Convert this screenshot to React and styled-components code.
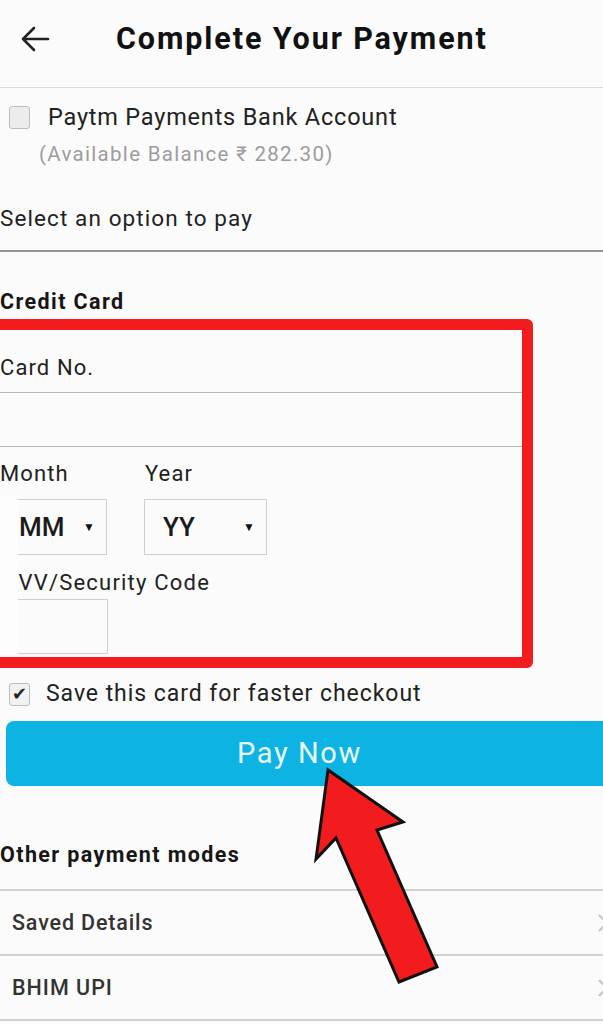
import styled, { createGlobalStyle } from "styled-components";

const GlobalStyle = createGlobalStyle`
  body {
    margin: 0;
    background: #fafbfa;
    font-family: Roboto, "Noto Sans", sans-serif;
    color: #1e1e1e;
  }
`;

function BackArrow() {
  return (
    <svg width="30" height="26" viewBox="0 0 30 26">
      <path
        d="M28 13 H3 M14 2 L3 13 L14 24"
        fill="none"
        stroke="#222"
        strokeWidth="2.6"
        strokeLinecap="round"
        strokeLinejoin="round"
      />
    </svg>
  );
}

function ChevronIcon() {
  return (
    <svg width="12" height="20" viewBox="0 0 12 20">
      <path d="M2 2 L10 10 L2 18" fill="none" stroke="#c4c4c4" strokeWidth="2" />
    </svg>
  );
}

function Pointer() {
  return (
    <svg width="150" height="240" viewBox="0 0 150 240">
      <polygon
        points="28,10 16,99 36,78 99,222 137,207 77,70 103,62"
        fill="#f21b1e"
        stroke="#111"
        strokeWidth="3"
        strokeLinejoin="miter"
      />
    </svg>
  );
}

function App() {
  return (
    <Page>
      <GlobalStyle />
      <Header>
        <BackButton>
          <BackArrow />
        </BackButton>
        <Title>Complete Your Payment</Title>
      </Header>

      <BankRow>
        <Check />
        <BankText>
          <BankName>Paytm Payments Bank Account</BankName>
          <Balance>(Available Balance ₹ 282.30)</Balance>
        </BankText>
      </BankRow>

      <SelectPrompt>Select an option to pay</SelectPrompt>

      <SectionTitle $top={36}>Credit Card</SectionTitle>

      <CardBox>
        <CardLabel>Card No.</CardLabel>
        <CardInput />
        <ExpiryLabels>
          <FieldLabel $width={145}>Month</FieldLabel>
          <FieldLabel>Year</FieldLabel>
        </ExpiryLabels>
        <ExpiryRow>
          <Dropdown $width={117} $pad={28}>
            MM <Caret>▼</Caret>
          </Dropdown>
          <Dropdown $width={123} $pad={18}>
            YY <Caret>▼</Caret>
          </Dropdown>
        </ExpiryRow>
        <CvvLabel>CVV/Security Code</CvvLabel>
        <CvvInput />
        <Glare />
      </CardBox>

      <SaveRow>
        <Check $checked>✔</Check>
        <SaveText>Save this card for faster checkout</SaveText>
      </SaveRow>

      <PayButton>Pay Now</PayButton>

      <SectionTitle $top={55}>Other payment modes</SectionTitle>

      <ModeList>
        <ModeRow $spacing={0.85}>
          Saved Details
          <ChevronIcon />
        </ModeRow>
        <ModeRow $spacing={1}>
          BHIM UPI
          <ChevronIcon />
        </ModeRow>
      </ModeList>

      <PointerWrap>
        <Pointer />
      </PointerWrap>
    </Page>
  );
}

const Page = styled.div`
  position: relative;
  width: 603px;
  height: 1024px;
  overflow: hidden;
`;

const Header = styled.header`
  display: flex;
  align-items: center;
  height: 87px;
  border-bottom: 1px solid #dcdcdc;
  background: #fbfbfb;
`;

const BackButton = styled.div`
  display: flex;
  width: 116px;
  padding-left: 20px;
  box-sizing: border-box;
  margin-top: -10px;
`;

const Title = styled.h1`
  margin: -10px 0 0;
  font-size: 30.5px;
  font-weight: 700;
  color: #111;
  letter-spacing: 1.9px;
`;

const BankRow = styled.div`
  display: flex;
  gap: 18px;
  padding: 15px 0 0 9px;
  height: 96px;
  box-sizing: border-box;
`;

const Check = styled.div`
  width: 19px;
  height: 21px;
  border: 1.5px solid #bdbdbd;
  border-radius: 3px;
  background: ${(p) => (p.$checked ? "#f1f1f1" : "#ececec")};
  margin-top: 3px;
  flex-shrink: 0;
  font-size: 18px;
  line-height: 19px;
  text-align: center;
  color: #222;
`;

const BankText = styled.div`
  display: flex;
  flex-direction: column;
`;

const BankName = styled.span`
  font-size: 23.5px;
  line-height: 28px;
  letter-spacing: 0.8px;
  color: #222;
`;

const Balance = styled.span`
  font-size: 20.5px;
  line-height: 28px;
  letter-spacing: 1.3px;
  margin: 9px 0 0 -9px;
  color: #9d9d9d;
`;

const SelectPrompt = styled.div`
  height: 68px;
  box-sizing: border-box;
  padding-top: 20px;
  font-size: 22.5px;
  line-height: 28px;
  letter-spacing: 1.1px;
  color: #222;
  border-bottom: 2px solid #959595;
`;

const SectionTitle = styled.h2`
  margin: ${(p) => p.$top}px 0 0;
  font-size: 21.5px;
  line-height: 28px;
  font-weight: 700;
  letter-spacing: 1.4px;
  color: #161616;
`;

const CardBox = styled.section`
  position: relative;
  width: 544px;
  height: 349px;
  margin: 3px 0 0 -11px;
  border: 11px solid #f21b1e;
  border-radius: 6px;
  box-sizing: border-box;
  background: #fafbfa;
`;

const CardLabel = styled.div`
  height: 63px;
  box-sizing: border-box;
  padding-top: 24px;
  font-size: 22px;
  line-height: 28px;
  letter-spacing: 1.1px;
  color: #222;
  border-bottom: 1.5px solid #b8b8b8;
`;

const CardInput = styled.div`
  height: 53px;
  border-bottom: 1.5px solid #b8b8b8;
`;

const ExpiryLabels = styled.div`
  display: flex;
  height: 52px;
  align-items: center;
  box-sizing: border-box;
`;

const FieldLabel = styled.span`
  width: ${(p) => (p.$width ? `${p.$width}px` : "auto")};
  font-size: 22px;
  letter-spacing: 1.1px;
  color: #222;
`;

const ExpiryRow = styled.div`
  display: flex;
  gap: 37px;
  margin-left: -10px;
`;

const Dropdown = styled.div`
  display: flex;
  align-items: center;
  justify-content: space-between;
  width: ${(p) => p.$width}px;
  height: 56px;
  box-sizing: border-box;
  padding: 0 11px 0 ${(p) => p.$pad}px;
  border: 1.5px solid #cfcfcf;
  font-size: 26px;
  font-weight: 500;
  color: #1a1a1a;
`;

const Caret = styled.span`
  font-size: 12px;
  color: #111;
`;

const CvvLabel = styled.div`
  height: 44px;
  display: flex;
  align-items: center;
  box-sizing: border-box;
  padding: 11px 0 0 3px;
  font-size: 22px;
  letter-spacing: 1.2px;
  color: #222;
`;

const CvvInput = styled.div`
  width: 118px;
  height: 55px;
  margin-left: -10px;
  box-sizing: border-box;
  border: 1.5px solid #cfcfcf;
`;

const Glare = styled.div`
  position: absolute;
  left: 0;
  top: 166px;
  width: 18px;
  height: 160px;
  background: #fdfdfd;
`;

const SaveRow = styled.div`
  display: flex;
  gap: 16px;
  align-items: center;
  height: 50px;
  padding-left: 9px;
  box-sizing: border-box;
`;

const SaveText = styled.span`
  font-size: 23px;
  letter-spacing: 0.95px;
  color: #222;
`;

const PayButton = styled.button`
  display: block;
  width: 605px;
  height: 65px;
  margin: 3px 0 0 6px;
  border: none;
  border-radius: 8px;
  background: #0cb3e3;
  color: #eaf7fb;
  font-family: Roboto, sans-serif;
  font-size: 29px;
  letter-spacing: 1.6px;
  text-align: left;
  padding: 0 0 2px 231px;
`;

const ModeList = styled.div`
  margin-top: 20px;
  border-top: 2px solid #d2d2d2;
`;

const ModeRow = styled.div`
  display: flex;
  align-items: center;
  justify-content: space-between;
  height: 63px;
  padding-left: 12px;
  border-bottom: 2px solid #d2d2d2;
  font-size: 21.5px;
  font-weight: 500;
  letter-spacing: ${(p) => p.$spacing}px;
  color: #333;

  svg {
    margin-right: -6px;
  }
`;

const PointerWrap = styled.div`
  position: absolute;
  left: 300px;
  top: 760px;
`;

export default App;
